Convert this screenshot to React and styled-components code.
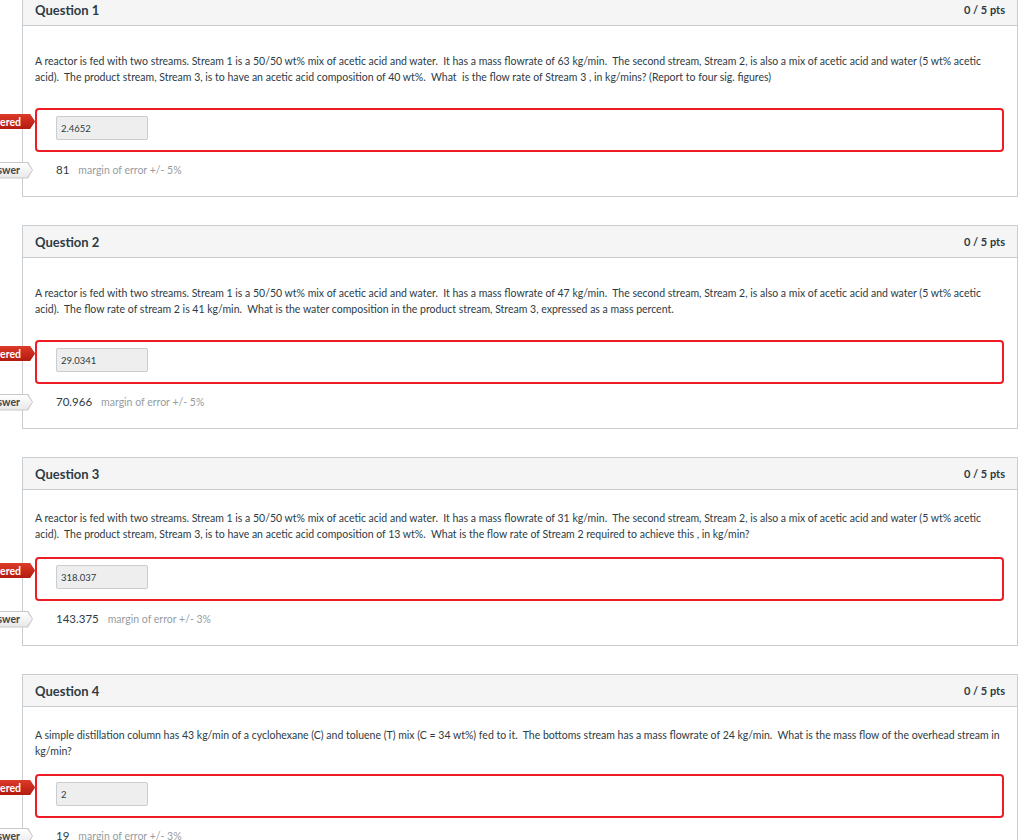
import React from 'react'
import styled, { createGlobalStyle } from 'styled-components'

const GlobalStyle = createGlobalStyle`
  body {
    margin: 0;
    background: #fff;
    font-family: Lato, "Open Sans", sans-serif;
    color: #2d3b45;
    overflow: hidden;
  }
`

const Page = styled.div`
  display: flex;
  flex-direction: column;
  gap: 28px;
  margin-top: -7px;
  padding-left: 22px;
  width: 996px;
`

const Card = styled.div`
  border: 1px solid #c7cdd1;
  background: #fff;
`

const Header = styled.div`
  display: flex;
  justify-content: space-between;
  align-items: center;
  height: 31px;
  padding: 0 12px;
  background: #f5f5f5;
  border-bottom: 1px solid #c7cdd1;
`

const Title = styled.div`
  font-size: 13px;
  font-weight: 700;
  color: #2d3b45;
`

const Points = styled.div`
  font-size: 11px;
  font-weight: 700;
  color: #2d3b45;
`

const Body = styled.div`
  padding: ${p => (p.$loose ? '27px' : '20px')} 13px 18px 12px;
`

const Text = styled.p`
  margin: 0 0 ${p => (p.$loose ? '23px' : '15px')};
  font-size: 10.5px;
  line-height: 16px;
  color: #2d3b45;
`

const AnswerBox = styled.div`
  position: relative;
  border: 2px solid #ee1c25;
  border-radius: 4px;
  padding: 6px 19px 0;
  height: 34px;
`

const Input = styled.div`
  width: 82px;
  height: 22px;
  padding: 0 4px;
  display: flex;
  align-items: center;
  background: #eeeeee;
  border: 1px solid #c7cdd1;
  border-radius: 2px;
  font-size: 9.5px;
  color: #2d3b45;
`

const CorrectRow = styled.div`
  position: relative;
  display: flex;
  align-items: baseline;
  gap: 9px;
  margin-top: 10px;
  padding-left: 21px;
  line-height: 16px;
`

const AnswerValue = styled.span`
  font-size: 11.5px;
  color: #2d3b45;
`

const Margin = styled.span`
  font-size: 10.5px;
  color: #969ca1;
`

const Tag = styled.div`
  position: absolute;
  right: calc(100% + 2px);
  top: ${p => p.$top};
  width: 90px;
  height: ${p => (p.$variant === 'correct' ? '17px' : '15px')};
  clip-path: polygon(0 0, calc(100% - 5px) 0, 100% 50%, calc(100% - 5px) 100%, 0 100%);
  background: ${p => (p.$variant === 'correct' ? '#c9c9c9' : '#b21d12')};
`

const TagInner = styled.div`
  position: absolute;
  inset: ${p => (p.$variant === 'correct' ? '1px 1px 1px 0' : '0')};
  clip-path: polygon(0 0, calc(100% - 5px) 0, 100% 50%, calc(100% - 5px) 100%, 0 100%);
  background: ${p =>
    p.$variant === 'correct'
      ? 'linear-gradient(#ffffff, #e8e8e8)'
      : 'linear-gradient(#dd3a2a, #b31b10)'};
  display: flex;
  align-items: center;
  justify-content: flex-end;
  padding-right: ${p => (p.$variant === 'correct' ? '12px' : '14px')};
  font-size: 10.5px;
  font-weight: 700;
  color: ${p => (p.$variant === 'correct' ? '#444' : '#fff')};
  white-space: nowrap;
`

const questions = [
  {
    n: 1,
    loose: true,
    text:
      'A reactor is fed with two streams. Stream 1 is a 50/50 wt% mix of acetic acid and water.\u00a0 It has a mass flowrate of 63 kg/min.\u00a0 The second stream, Stream 2, is also a mix of acetic acid and water (5 wt% acetic acid).\u00a0 The product stream, Stream 3, is to have an acetic acid composition of 40 wt%.\u00a0 What\u00a0 is the flow rate of Stream 3 , in kg/mins? (Report to four sig. figures)',
    given: '2.4652',
    correct: '81',
    margin: '5%'
  },
  {
    n: 2,
    loose: true,
    text:
      'A reactor is fed with two streams. Stream 1 is a 50/50 wt% mix of acetic acid and water.\u00a0 It has a mass flowrate of 47 kg/min.\u00a0 The second stream, Stream 2, is also a mix of acetic acid and water (5 wt% acetic acid).\u00a0 The flow rate of stream 2 is 41 kg/min.\u00a0 What is the water composition in the product stream, Stream 3, expressed as a mass percent.',
    given: '29.0341',
    correct: '70.966',
    margin: '5%'
  },
  {
    n: 3,
    loose: false,
    text:
      'A reactor is fed with two streams. Stream 1 is a 50/50 wt% mix of acetic acid and water.\u00a0 It has a mass flowrate of 31 kg/min.\u00a0 The second stream, Stream 2, is also a mix of acetic acid and water (5 wt% acetic acid).\u00a0 The product stream, Stream 3, is to have an acetic acid composition of 13 wt%.\u00a0 What is the flow rate of Stream 2 required to achieve this , in kg/min?',
    given: '318.037',
    correct: '143.375',
    margin: '3%'
  },
  {
    n: 4,
    loose: false,
    text:
      'A simple distillation column has 43 kg/min of a cyclohexane (C) and toluene (T) mix (C = 34 wt%) fed to it.\u00a0 The bottoms stream has a mass flowrate of 24 kg/min.\u00a0 What is the mass flow of the overhead stream in kg/min?',
    given: '2',
    correct: '19',
    margin: '3%'
  }
]

function Question({ q }) {
  return (
    <Card>
      <Header>
        <Title>Question {q.n}</Title>
        <Points>0 / 5 pts</Points>
      </Header>
      <Body $loose={q.loose}>
        <Text $loose={q.loose}>{q.text}</Text>
        <AnswerBox>
          <Tag $top="4px">
            <TagInner>You Answered</TagInner>
          </Tag>
          <Input>{q.given}</Input>
        </AnswerBox>
        <CorrectRow>
          <Tag $variant="correct" $top="-0.5px">
            <TagInner $variant="correct">Correct Answer</TagInner>
          </Tag>
          <AnswerValue>{q.correct}</AnswerValue>
          <Margin>margin of error +/- {q.margin}</Margin>
        </CorrectRow>
      </Body>
    </Card>
  )
}

export default function App() {
  return (
    <>
      <GlobalStyle />
      <Page>
        {questions.map(q => (
          <Question key={q.n} q={q} />
        ))}
      </Page>
    </>
  )
}
